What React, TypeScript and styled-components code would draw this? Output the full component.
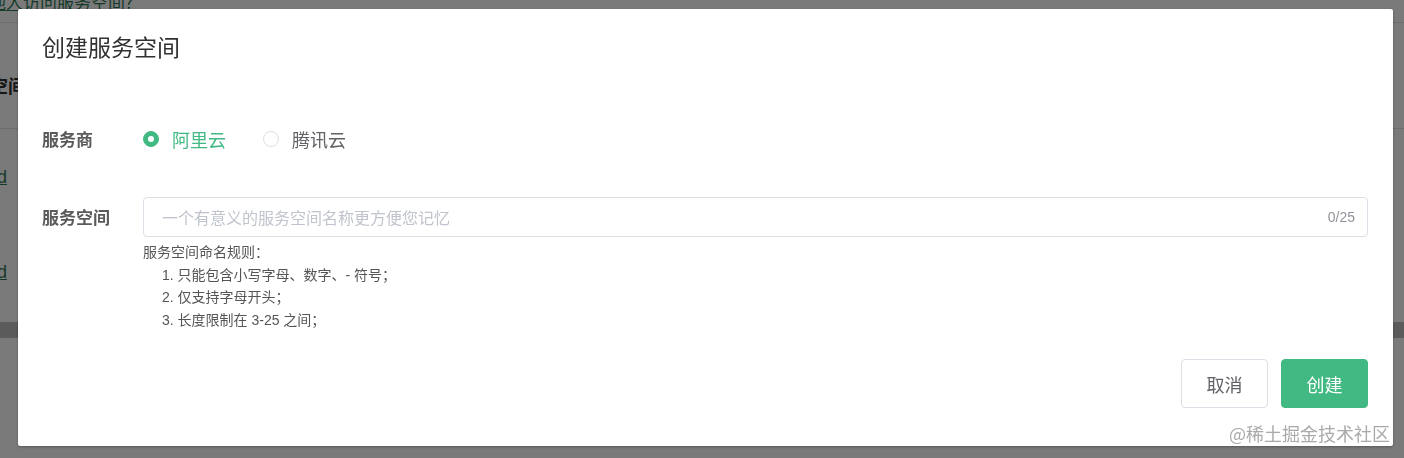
import React from "react";
import styled, { createGlobalStyle } from "styled-components";

const GREEN = "#42b983";

const Global = createGlobalStyle`
  html, body { margin: 0; padding: 0; background: #fff; }
  body {
    font-family: "Liberation Sans", "Noto Sans CJK SC", sans-serif;
    overflow: hidden;
    width: 1404px;
    height: 458px;
  }
  * { box-sizing: border-box; }
`;

/* ---------- background page ---------- */
const Page = styled.div`
  width: 1404px;
  height: 458px;
  display: flex;
  flex-direction: column;
  overflow: hidden;
`;

const TopLink = styled.a`
  display: block;
  margin-top: -9px;
  margin-left: -79px;
  font-family: "Noto Sans CJK SC", sans-serif;
  font-size: 17px;
  line-height: 22px;
  color: #2f7a56;
  text-decoration: underline;
  white-space: nowrap;
`;

const Divider = styled.div<{ $mt: number }>`
  height: 1px;
  background: #e4e4e4;
  margin-top: ${(p) => p.$mt}px;
`;

const SectionTitle = styled.div`
  margin-top: 50px;
  margin-left: -46px;
  font-family: "Noto Sans CJK SC", sans-serif;
  font-size: 18px;
  font-weight: bold;
  color: #333;
  line-height: 24px;
  white-space: nowrap;
`;

const RowLink = styled.a<{ $mt: number }>`
  display: block;
  margin-top: ${(p) => p.$mt}px;
  margin-left: -36px;
  font-size: 18px;
  line-height: 22px;
  color: #2f7a56;
  text-decoration: underline;
  white-space: nowrap;
`;

const Band = styled.div`
  margin-top: 39px;
  height: 16px;
  background: #bfbfbf;
`;

/* ---------- modal ---------- */
const Overlay = styled.div`
  position: fixed;
  inset: 0;
  background: rgba(0, 0, 0, 0.52);
  padding: 9px 11px 0 18px;
`;

const Dialog = styled.div`
  width: 1375px;
  height: 437px;
  background: #fff;
  border-radius: 2px;
  box-shadow: 0 1px 3px rgba(0, 0, 0, 0.3);
  display: flex;
  flex-direction: column;
  padding: 22px 25px 38px 24px;
`;

const Title = styled.h2`
  margin: 0;
  font-family: "Noto Sans CJK SC", sans-serif;
  font-weight: 400;
  font-size: 23px;
  line-height: 30px;
  color: #303133;
`;

const Form = styled.div`
  margin-top: 58px;
  display: flex;
  flex-direction: column;
`;

const FieldRow = styled.div<{ $mt?: number; $align?: string }>`
  display: flex;
  align-items: ${(p) => p.$align || "center"};
  margin-top: ${(p) => p.$mt || 0}px;
`;

const Label = styled.div<{ $h: number }>`
  width: 101px;
  flex: none;
  font-family: "Noto Sans CJK SC", sans-serif;
  font-weight: 700;
  font-size: 17px;
  color: #5a5a5a;
  line-height: ${(p) => p.$h}px;
`;

const RadioGroup = styled.div`
  display: flex;
  align-items: center;
  height: 40px;
  gap: 37px;
`;

const RadioItem = styled.label<{ $checked?: boolean }>`
  display: flex;
  align-items: center;
  gap: 13px;
  font-family: "Noto Sans CJK SC", sans-serif;
  font-size: 18px;
  color: ${(p) => (p.$checked ? GREEN : "#606266")};
  cursor: pointer;
`;

const RadioDot = styled.span<{ $checked?: boolean }>`
  width: 16px;
  height: 16px;
  border-radius: 50%;
  flex: none;
  border: 1px solid ${(p) => (p.$checked ? GREEN : "#dcdfe6")};
  background: ${(p) => (p.$checked ? GREEN : "#fff")};
  display: flex;
  align-items: center;
  justify-content: center;
  &::after {
    content: "";
    width: 6px;
    height: 6px;
    border-radius: 50%;
    background: #fff;
    display: ${(p) => (p.$checked ? "block" : "none")};
  }
`;

const FieldCol = styled.div`
  flex: 1;
  display: flex;
  flex-direction: column;
`;

const InputBox = styled.div`
  height: 40px;
  border: 1px solid #dcdfe6;
  border-radius: 4px;
  display: flex;
  align-items: center;
  padding: 0 12px 0 18px;
`;

const Input = styled.input`
  flex: 1;
  border: none;
  outline: none;
  font-family: "Noto Sans CJK SC", sans-serif;
  font-size: 16px;
  color: #606266;
  background: transparent;
  padding: 0;
  &::placeholder { color: #c0c4cc; }
`;

const Counter = styled.span`
  font-size: 14px;
  color: #909399;
`;

const Rules = styled.div`
  margin-top: 4px;
  font-family: "Liberation Sans", "Noto Sans CJK SC", sans-serif;
  font-size: 14px;
  line-height: 22.5px;
  color: #555;
`;

const RuleList = styled.ol`
  margin: 0;
  padding: 0 0 0 19px;
  list-style: none;
`;

const Footer = styled.div`
  margin-top: auto;
  display: flex;
  justify-content: flex-end;
  gap: 13px;
`;

const Button = styled.button<{ $primary?: boolean }>`
  width: 87px;
  height: 49px;
  border-radius: 4px;
  font-family: "Noto Sans CJK SC", sans-serif;
  font-size: 18px;
  cursor: pointer;
  border: 1px solid ${(p) => (p.$primary ? GREEN : "#dcdfe6")};
  background: ${(p) => (p.$primary ? GREEN : "#fff")};
  color: ${(p) => (p.$primary ? "#fff" : "#606266")};
`;

const Watermark = styled.div`
  position: fixed;
  right: 14px;
  bottom: 14px;
  font-family: "Noto Sans CJK SC", sans-serif;
  font-size: 18px;
  line-height: 22px;
  color: rgba(140, 140, 140, 0.75);
  pointer-events: none;
`;

export default function App() {
  return (
    <>
      <Global />
      <Page>
        <TopLink>如何邀请他人访问服务空间?</TopLink>
        <Divider $mt={9} />
        <SectionTitle>服务空间</SectionTitle>
        <Divider $mt={31} />
        <RowLink $mt={37}>cloud</RowLink>
        <RowLink $mt={73}>cloud</RowLink>
        <Band />
      </Page>
      <Overlay>
        <Dialog>
          <Title>创建服务空间</Title>
          <Form>
            <FieldRow>
              <Label $h={40}>服务商</Label>
              <RadioGroup>
                <RadioItem $checked>
                  <RadioDot $checked />
                  阿里云
                </RadioItem>
                <RadioItem>
                  <RadioDot />
                  腾讯云
                </RadioItem>
              </RadioGroup>
            </FieldRow>
            <FieldRow $mt={38} $align="flex-start">
              <Label $h={40}>服务空间</Label>
              <FieldCol>
                <InputBox>
                  <Input placeholder="一个有意义的服务空间名称更方便您记忆" />
                  <Counter>0/25</Counter>
                </InputBox>
                <Rules>
                  服务空间命名规则：
                  <RuleList>
                    <li>1. 只能包含小写字母、数字、- 符号；</li>
                    <li>2. 仅支持字母开头；</li>
                    <li>3. 长度限制在 3-25 之间；</li>
                  </RuleList>
                </Rules>
              </FieldCol>
            </FieldRow>
          </Form>
          <Footer>
            <Button>取消</Button>
            <Button $primary>创建</Button>
          </Footer>
        </Dialog>
      </Overlay>
      <Watermark>@稀土掘金技术社区</Watermark>
    </>
  );
}
